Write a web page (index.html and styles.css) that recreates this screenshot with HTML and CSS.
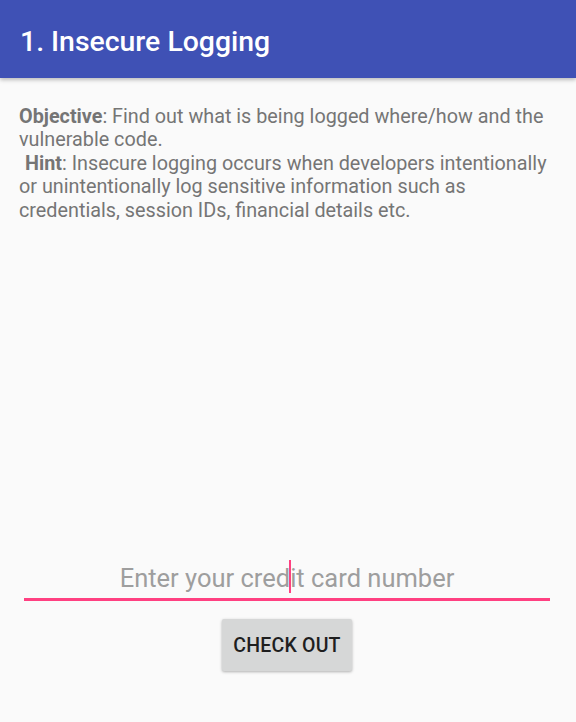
FILE: index.html
```html
<!DOCTYPE html>
<html>
<head>
<meta charset="utf-8">
<link rel="stylesheet" href="styles.css">
</head>
<body>
<header class="appbar">
  <h1 class="title">1. Insecure Logging</h1>
</header>
<main class="content">
  <p class="desc"><b>Objective</b>: Find out what is being logged where/how and the vulnerable code.<br><b class="hint">Hint</b>: Insecure logging occurs when developers intentionally or unintentionally log sensitive information such as credentials, session IDs, financial details etc.</p>
  <div class="spacer"></div>
  <div class="form">
    <div class="field">
      <span class="placeholder">Enter your cred<span class="cursor"></span>it card number</span>
    </div>
    <button class="btn">CHECK OUT</button>
  </div>
</main>
</body>
</html>
```

FILE: styles.css
```css
html, body {
  margin: 0;
  padding: 0;
  height: 100%;
}
body {
  background: #fafafa;
  font-family: Roboto, "Noto Sans", sans-serif;
  display: flex;
  flex-direction: column;
  overflow: hidden;
}
.appbar {
  height: 78px;
  background: #3f51b5;
  display: flex;
  align-items: center;
  padding: 0 20px;
  box-shadow: 0 2px 4px rgba(0,0,0,0.25);
  flex-shrink: 0;
  position: relative;
  z-index: 1;
}
.title {
  margin: 0;
  color: #ffffff;
  font-size: 28.4px;
  font-weight: 500;
  padding-top: 4px;
}
.content {
  flex: 1;
  display: flex;
  flex-direction: column;
  padding: 0 19px;
}
.desc {
  margin: 27px 0 0;
  font-size: 19.8px;
  line-height: 23.4px;
  color: #757575;
}
.desc b {
  font-weight: 700;
}
.hint {
  margin-left: 6px;
}
.spacer {
  height: 331px;
}
.form {
  display: flex;
  flex-direction: column;
  align-items: center;
  padding: 0 7px 0 5px;
}
.field {
  align-self: stretch;
  height: 40px;
  border-bottom: 3px solid #ff4081;
  display: flex;
  justify-content: center;
  align-items: flex-end;
  padding-bottom: 5px;
  box-sizing: content-box;
}
.placeholder {
  font-size: 25.5px;
  color: #9e9e9e;
  line-height: 28px;
  position: relative;
}
.cursor {
  display: inline-block;
  width: 2px;
  height: 33px;
  background: #ff4081;
  vertical-align: -6px;
  margin: 0 -1px;
}
.btn {
  margin-top: 18px;
  width: 130px;
  height: 52px;
  background: #d6d7d7;
  border: none;
  border-radius: 2px;
  box-shadow: 0 1px 3px rgba(0,0,0,0.3);
  font-family: Roboto, sans-serif;
  font-size: 19.5px;
  font-weight: 500;
  color: #1e1e1e;
  letter-spacing: 0.2px;
  padding: 0;
}
```
